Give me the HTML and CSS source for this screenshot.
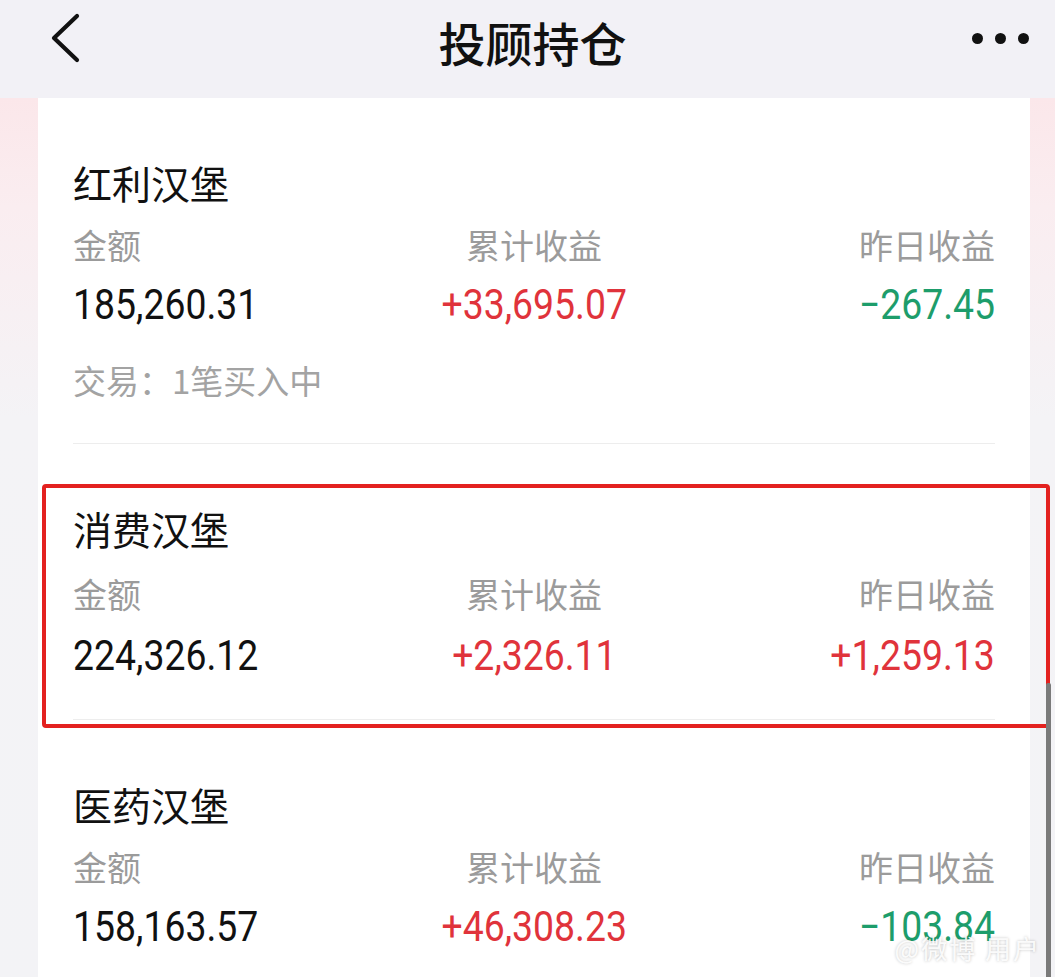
FILE: index.html
```html
<!DOCTYPE html>
<html lang="zh-CN">
<head>
<meta charset="utf-8">
<title>投顾持仓</title>
<link rel="stylesheet" href="styles.css">
</head>
<body>
<div class="page">
  <header class="nav">
    <div class="nav-left">
      <svg class="back" width="30" height="50" viewBox="0 0 30 50"><path d="M27 3 L4 25 L27 47" fill="none" stroke="#111" stroke-width="4.2" stroke-linecap="round" stroke-linejoin="round"/></svg>
    </div>
    <h1 class="nav-title">投顾持仓</h1>
    <div class="nav-right">
      <span class="dot"></span><span class="dot"></span><span class="dot"></span>
    </div>
  </header>
  <main class="body">
    <div class="strip"></div>
    <section class="card">
      <div class="item">
        <div class="name">红利汉堡</div>
        <div class="grid labels">
          <span>金额</span><span>累计收益</span><span>昨日收益</span>
        </div>
        <div class="grid nums">
          <span class="c1"><b>185,260.31</b></span>
          <span class="c2 up"><b>+33,695.07</b></span>
          <span class="c3 down"><b>−267.45</b></span>
        </div>
        <div class="trade">交易：1笔买入中</div>
      </div>
      <div class="item highlight">
        <div class="name">消费汉堡</div>
        <div class="grid labels">
          <span>金额</span><span>累计收益</span><span>昨日收益</span>
        </div>
        <div class="grid nums">
          <span class="c1"><b>224,326.12</b></span>
          <span class="c2 up"><b>+2,326.11</b></span>
          <span class="c3 up"><b>+1,259.13</b></span>
        </div>
        <div class="mark"></div>
      </div>
      <div class="item">
        <div class="name">医药汉堡</div>
        <div class="grid labels">
          <span>金额</span><span>累计收益</span><span>昨日收益</span>
        </div>
        <div class="grid nums">
          <span class="c1"><b>158,163.57</b></span>
          <span class="c2 up"><b>+46,308.23</b></span>
          <span class="c3 down"><b>−103.84</b></span>
        </div>
      </div>
    </section>
    <div class="strip right"></div>
    <div class="scrollbar"></div>
    <div class="watermark">@微博 用户</div>
  </main>
</div>
</body>
</html>
```
FILE: styles.css
```css
* { box-sizing: border-box; }
html, body { margin: 0; padding: 0; }
body {
  width: 1055px;
  height: 977px;
  overflow: hidden;
  background: #f3f2f6;
  font-family: "Noto Sans CJK SC", "Noto Sans", sans-serif;
  color: #111;
}
.page { display: flex; flex-direction: column; height: 977px; }

.nav {
  height: 98px;
  flex: none;
  background: #f2f1f6;
  display: grid;
  grid-template-columns: 1fr auto 1fr;
  align-items: start;
}
.nav-left { padding: 13px 0 0 50px; }
.back { display: block; }
.nav-title {
  margin: 18px 0 0 10px;
  font-size: 47px;
  line-height: 1;
  font-weight: 500;
  color: #111;
}
.nav-right {
  display: flex;
  justify-content: flex-end;
  gap: 12px;
  padding: 33px 26px 0 0;
}
.dot { width: 11px; height: 11px; border-radius: 50%; background: #111; }

.body {
  flex: 1;
  display: flex;
  position: relative;
}
.strip {
  width: 38px;
  flex: none;
  background: linear-gradient(to bottom, #fbe7ea 0, #faedf0 110px, #f4f3f6 320px, #f3f3f6 100%);
}
.strip.right { width: 25px; }
.card {
  width: 992px;
  flex: none;
  background: #fff;
  padding: 0 35px;
}
.item {
  position: relative;
  padding: 65px 0 46px;
  border-bottom: 1px solid #ededed;
}
.item.highlight { padding-bottom: 42px; }
.name {
  font-size: 39px;
  line-height: 1;
  color: #111;
}
.grid {
  display: grid;
  grid-template-columns: 1fr 1fr 1fr;
}
.grid > span:nth-child(1) { justify-self: start; }
.grid > span:nth-child(2) { justify-self: center; }
.grid > span:nth-child(3) { justify-self: end; }
.labels {
  margin-top: 26px;
  font-size: 34px;
  line-height: 1;
  color: #9b9b9b;
}
.nums {
  margin-top: 22px;
  font-family: Roboto, "Noto Sans", sans-serif;
  font-size: 42px;
  line-height: 1;
  color: #111;
}
.highlight .labels { margin-top: 29px; }
.highlight .nums { margin-top: 24px; }
.nums b {
  display: inline-block;
  font-weight: 400;
  transform: scaleX(0.89);
}
.nums .c1 b { transform-origin: left center; }
.nums .c2 b { transform-origin: center center; }
.nums .c3 b { transform-origin: right center; }
.nums .up { color: #e0333b; }
.nums .down { color: #1d9d6b; }
.trade {
  margin-top: 38px;
  font-size: 33px;
  line-height: 1;
  color: #a3a3a3;
}
.mark {
  position: absolute;
  left: -31px;
  right: -55px;
  top: 40px;
  bottom: -9px;
  border: 4px solid #e3211f;
  border-radius: 4px;
  pointer-events: none;
}
.scrollbar {
  position: absolute;
  right: 4px;
  top: 585px;
  bottom: 0;
  width: 5px;
  background: #7a7a7a;
  border-radius: 2px;
}
.watermark {
  position: absolute;
  right: 14px;
  top: 836px;
  font-size: 26px;
  line-height: 1.1;
  color: rgba(255,255,255,0.9);
  text-shadow: 0 0 3px rgba(0,0,0,0.25);
  letter-spacing: 2px;
}
```
